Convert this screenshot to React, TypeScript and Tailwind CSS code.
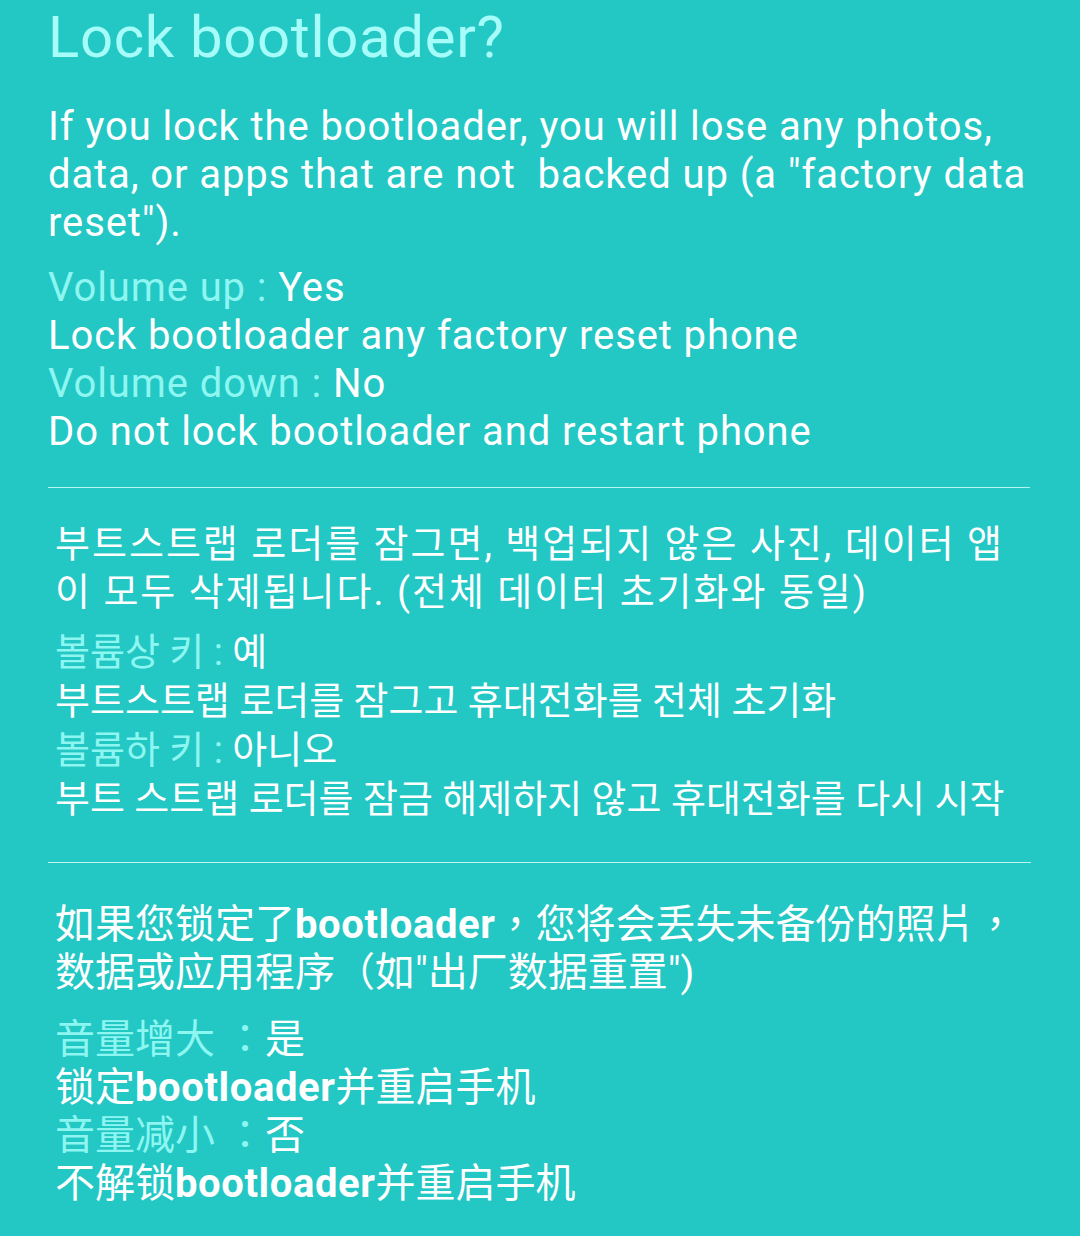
const Label = ({ k, v }: { k: string; v: string }) => (
    <div>
        <span className="text-[#8ef6f1]">{k}</span>
        <span className="text-white">{v}</span>
    </div>
);

const App = () => {
    return (
        <div
            className="w-[1080px] h-[1236px] overflow-hidden bg-[#23c7c4] text-white"
            style={{ fontFamily: 'Roboto, "Noto Sans CJK KR", "Noto Sans CJK SC", sans-serif' }}
        >
            <div className="px-12 pt-2">
                <h1 className="text-[58px] leading-[58px] tracking-[0.7px] text-[#a6fcf8] whitespace-nowrap">Lock bootloader?</h1>

                <div className="mt-[37px] text-[40px] leading-[48px] tracking-[0.9px] whitespace-nowrap">
                    <div>If you lock the bootloader, you will lose any photos,</div>
                    <div>data, or apps that are not&nbsp; backed up (a "factory data</div>
                    <div>reset").</div>
                </div>

                <div className="mt-[17px] text-[40px] leading-[48px] tracking-[0.9px] whitespace-nowrap">
                    <Label k="Volume up : " v="Yes" />
                    <div>Lock bootloader any factory reset phone</div>
                    <Label k="Volume down : " v="No" />
                    <div>Do not lock bootloader and restart phone</div>
                </div>
            </div>

            <div className="ml-12 mr-[50px] mt-[31px] h-px bg-[#b7f5f1]" />

            <div
                className="pl-[55px] mt-[32px] text-[38px] leading-[48px] whitespace-nowrap"
                style={{ fontFamily: 'Roboto, "Noto Sans CJK KR", sans-serif' }}
            >
                <div className="tracking-[2px]">
                    <div>부트스트랩 로더를 잠그면, 백업되지 않은 사진, 데이터 앱</div>
                    <div>이 모두 삭제됩니다. (전체 데이터 초기화와 동일)</div>
                </div>
                <div className="mt-3 leading-[49px]">
                    <Label k="볼륨상 키 : " v="예" />
                    <div>부트스트랩 로더를 잠그고 휴대전화를 전체 초기화</div>
                    <Label k="볼륨하 키 : " v="아니오" />
                    <div>부트 스트랩 로더를 잠금 해제하지 않고 휴대전화를 다시 시작</div>
                </div>
            </div>

            <div className="ml-12 mr-[49px] mt-[38px] h-px bg-[#b7f5f1]" />

            <div
                className="pl-[55px] mt-[38px] text-[40px] leading-[48px] whitespace-nowrap"
                style={{ fontFamily: 'Roboto, "Noto Sans CJK TC", sans-serif' }}
            >
                <div>如果您锁定了<span className="font-bold tracking-[0.6px]">bootloader</span>，您将会丢失未备份的照片，</div>
                <div>数据或应用程序（如"出厂数据重置")</div>
                <div className="mt-[19px]">
                    <Label k="音量增大 ：" v="是" />
                    <div>锁定<span className="font-bold tracking-[0.6px]">bootloader</span>并重启手机</div>
                    <Label k="音量减小 ：" v="否" />
                    <div>不解锁<span className="font-bold tracking-[0.6px]">bootloader</span>并重启手机</div>
                </div>
            </div>
        </div>
    );
};

export default App;
